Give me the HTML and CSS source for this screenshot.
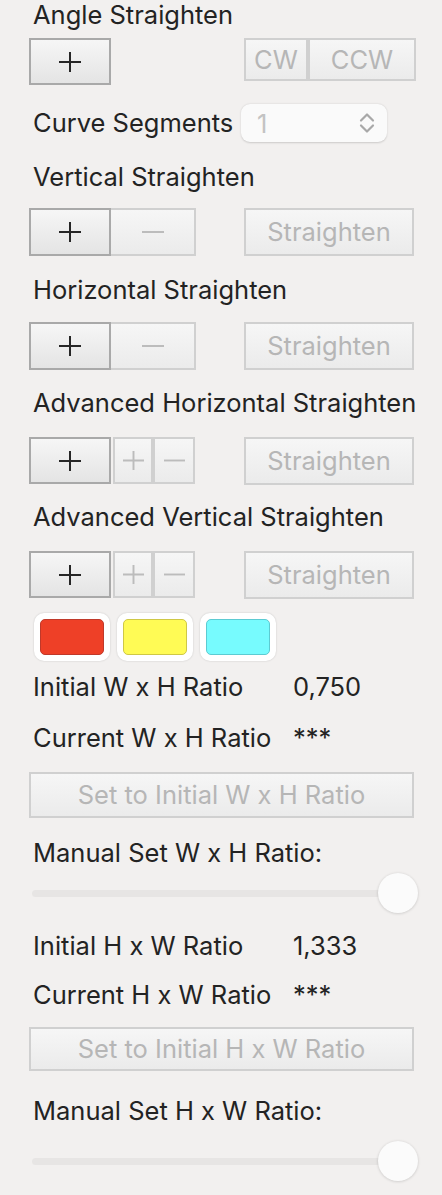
FILE: index.html
```html
<!DOCTYPE html>
<html>
<head>
<meta charset="utf-8">
<link rel="stylesheet" href="styles.css">
</head>
<body>
<div class="panel">
  <div class="label">Angle Straighten</div>
  <div class="row row-a mt8">
    <div class="group">
      <div class="btn sel plus-btn tall47"><svg class="ico" viewBox="0 0 22 22"><path d="M0 11H22M11 1V21" class="stroke-dark"/></svg></div>
    </div>
    <div class="group right">
      <div class="btn cw">CW</div>
      <div class="btn ccw">CCW</div>
    </div>
  </div>
  <div class="row-curve mt19">
    <div class="label">Curve Segments</div>
    <div class="stepper">
      <span class="step-val">1</span>
      <svg class="chev" viewBox="0 0 16 22"><path d="M2 8.5L8 2.5L14 8.5M2 13.5L8 19.5L14 13.5" /></svg>
    </div>
  </div>

  <div class="label mt20">Vertical Straighten</div>
  <div class="row mt16">
    <div class="group">
      <div class="btn sel plus-btn"><svg class="ico" viewBox="0 0 22 22"><path d="M0 11H22M11 1V21" class="stroke-dark"/></svg></div>
      <div class="btn minus-btn"><svg class="ico" viewBox="0 0 22 22"><path d="M0 11H22" class="stroke-light"/></svg></div>
    </div>
    <div class="btn straight">Straighten</div>
  </div>

  <div class="label mt19">Horizontal Straighten</div>
  <div class="row mt17">
    <div class="group">
      <div class="btn sel plus-btn"><svg class="ico" viewBox="0 0 22 22"><path d="M0 11H22M11 1V21" class="stroke-dark"/></svg></div>
      <div class="btn minus-btn"><svg class="ico" viewBox="0 0 22 22"><path d="M0 11H22" class="stroke-light"/></svg></div>
    </div>
    <div class="btn straight">Straighten</div>
  </div>

  <div class="label mt18">Advanced Horizontal Straighten</div>
  <div class="row mt19">
    <div class="group">
      <div class="btn sel plus-btn tall47"><svg class="ico" viewBox="0 0 22 22"><path d="M0 11H22M11 1V21" class="stroke-dark"/></svg></div>
      <div class="btn small-a tall47"><svg class="ico" viewBox="0 0 22 22"><path d="M0 11H22M11 1V21" class="stroke-light"/></svg></div>
      <div class="btn small-b tall47"><svg class="ico" viewBox="0 0 22 22"><path d="M0 11H22" class="stroke-light"/></svg></div>
    </div>
    <div class="btn straight">Straighten</div>
  </div>

  <div class="label mt17">Advanced Vertical Straighten</div>
  <div class="row mt19">
    <div class="group">
      <div class="btn sel plus-btn tall47"><svg class="ico" viewBox="0 0 22 22"><path d="M0 11H22M11 1V21" class="stroke-dark"/></svg></div>
      <div class="btn small-a tall47"><svg class="ico" viewBox="0 0 22 22"><path d="M0 11H22M11 1V21" class="stroke-light"/></svg></div>
      <div class="btn small-b tall47"><svg class="ico" viewBox="0 0 22 22"><path d="M0 11H22" class="stroke-light"/></svg></div>
    </div>
    <div class="btn straight">Straighten</div>
  </div>

  <div class="swatches mt14">
    <div class="swatch"><div class="chip red"></div></div>
    <div class="swatch"><div class="chip yellow"></div></div>
    <div class="swatch"><div class="chip cyan"></div></div>
  </div>

  <div class="kv mt11"><span class="label">Initial W x H Ratio</span><span class="val">0,750</span></div>
  <div class="kv mt21"><span class="label">Current W x H Ratio</span><span class="val">***</span></div>
  <div class="btn wide mt19">Set to Initial W x H Ratio</div>
  <div class="label mt20">Manual Set W x H Ratio:</div>
  <div class="slider mt5"><div class="track"></div><div class="knob"></div></div>

  <div class="kv mt18"><span class="label">Initial H x W Ratio</span><span class="val">1,333</span></div>
  <div class="kv mt19"><span class="label">Current H x W Ratio</span><span class="val">***</span></div>
  <div class="btn wide wide44 mt17">Set to Initial H x W Ratio</div>
  <div class="label mt25">Manual Set H x W Ratio:</div>
  <div class="slider mt15"><div class="track"></div><div class="knob"></div></div>
</div>
</body>
</html>
```
FILE: styles.css
```css
* { box-sizing: border-box; }
html, body {
  margin: 0;
  padding: 0;
  background: #f2f0ef;
}
body {
  font-family: Inter, "Noto Sans", "Liberation Sans", sans-serif;
  font-size: 25.5px;
  color: #232323;
  width: 442px;
  height: 1195px;
  overflow: hidden;
}
.panel {
  display: flex;
  flex-direction: column;
  padding-left: 29px;
}
.label {
  display: block;
  height: 30px;
  line-height: 30px;
  padding-left: 4px;
  white-space: nowrap;
}
.mt5 { margin-top: 5px; }
.mt8 { margin-top: 8px; }
.mt11 { margin-top: 11px; }
.mt14 { margin-top: 14px; }
.mt15 { margin-top: 15px; }
.mt16 { margin-top: 16px; }
.mt17 { margin-top: 17px; }
.mt18 { margin-top: 18px; }
.mt19 { margin-top: 19px; }
.mt20 { margin-top: 20px; }
.mt21 { margin-top: 21px; }
.mt25 { margin-top: 25px; }

.row {
  display: grid;
  grid-template-columns: 215px auto;
  align-items: start;
  height: 48px;
}
.row-a { height: 47px; }
.group {
  display: flex;
  align-items: flex-start;
}
.btn {
  display: flex;
  align-items: center;
  justify-content: center;
  height: 48px;
  border: 2px solid #d0d0d0;
  background: linear-gradient(#f6f6f6, #ebebeb);
  color: #b6b6b6;
  line-height: 1;
  white-space: nowrap;
}
.btn.sel {
  border-color: #a9a9a9;
  background: linear-gradient(#f6f6f6, #e4e4e4);
  color: #232323;
}
.tall47 { height: 47px; }
.plus-btn { width: 82px; }
.minus-btn { width: 85px; border-left: none; }
.small-a { width: 40px; margin-left: 2px; }
.small-b { width: 42px; }
.ico { width: 22px; height: 22px; display: block; }
.small-a .ico, .small-b .ico { width: 21px; height: 21px; }
.ico path { fill: none; stroke-width: 2; }
.stroke-dark { stroke: #262626; }
.stroke-light { stroke: #bcbcbc; }

.right { height: 43px; }
.cw { width: 64px; height: 43px; }
.ccw { width: 108px; height: 43px; }
.straight { width: 170px; }

.row-curve {
  display: grid;
  grid-template-columns: 212px auto;
  align-items: center;
  height: 38px;
}
.stepper {
  width: 146px;
  height: 38px;
  border-radius: 9px;
  background: #fafafa;
  box-shadow: 0 0.5px 2px rgba(0,0,0,0.16);
  display: flex;
  align-items: center;
  justify-content: space-between;
  padding: 0 12px 0 16px;
  color: #c3c3c3;
}
.chev { width: 16px; height: 22px; display: block; }
.chev path { fill: none; stroke: #a8a8a8; stroke-width: 2.2; stroke-linecap: round; stroke-linejoin: round; }

.swatches {
  display: flex;
  gap: 7px;
  padding-left: 5px;
  height: 48px;
}
.swatch {
  width: 76px;
  height: 48px;
  border-radius: 10px;
  background: #ffffff;
  box-shadow: 0 0 2px rgba(0,0,0,0.18);
  display: flex;
  align-items: center;
  justify-content: center;
}
.chip {
  width: 64px;
  height: 36px;
  border-radius: 5px;
  border: 1px solid;
}
.red { background: #ee4027; border-color: #c0392a; }
.yellow { background: #fffb55; border-color: #cfc845; }
.cyan { background: #77fbfe; border-color: #5ccbd2; }

.kv {
  display: grid;
  grid-template-columns: 264px auto;
  height: 30px;
  line-height: 30px;
}
.val { white-space: nowrap; }

.wide { width: 385px; height: 46px; }
.wide44 { height: 44px; }

.slider {
  display: flex;
  align-items: center;
  height: 40px;
  width: 389px;
  padding-left: 3px;
}
.track {
  flex: 1;
  height: 7px;
  border-radius: 4px;
  background: #e7e5e4;
}
.knob {
  width: 40px;
  height: 40px;
  margin-left: -20px;
  border-radius: 50%;
  background: #fbfbfb;
  box-shadow: 0 0.5px 3px rgba(0,0,0,0.18);
}
```
